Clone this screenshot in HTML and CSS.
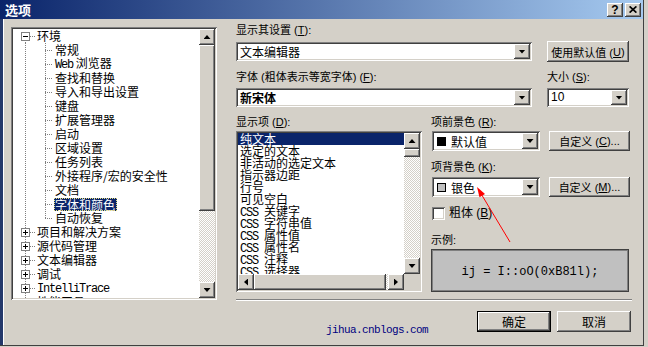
FILE: index.html
```html
<!DOCTYPE html>
<html lang="zh-CN">
<head>
<meta charset="utf-8">
<title>选项</title>
<link rel="stylesheet" href="styles.css">
</head>
<body>
<div class="window">
  <div class="titlebar">
    <span class="title">选项</span>
    <div class="tbtns">
      <span class="tbtn">?</span>
      <span class="tbtn"><svg width="8" height="7" viewBox="0 0 8 7"><path d="M0.6 0.4L7.4 6.6M7.4 0.4L0.6 6.6" stroke="#000" stroke-width="1.7"/></svg></span>
    </div>
  </div>
  <div class="client">
    <div class="tree">
      <div class="tree-items">
        <div class="row"><span class="g0 first"><i class="exp"></i></span><span class="t">环境</span></div>
        <div class="row"><span class="g1"></span><span class="t">常规</span></div>
        <div class="row"><span class="g1"></span><span class="t"><span class="asc">Web</span> 浏览器</span></div>
        <div class="row"><span class="g1"></span><span class="t">查找和替换</span></div>
        <div class="row"><span class="g1"></span><span class="t">导入和导出设置</span></div>
        <div class="row"><span class="g1"></span><span class="t">键盘</span></div>
        <div class="row"><span class="g1"></span><span class="t">扩展管理器</span></div>
        <div class="row"><span class="g1"></span><span class="t">启动</span></div>
        <div class="row"><span class="g1"></span><span class="t">区域设置</span></div>
        <div class="row"><span class="g1"></span><span class="t">任务列表</span></div>
        <div class="row"><span class="g1"></span><span class="t">外接程序/宏的安全性</span></div>
        <div class="row"><span class="g1"></span><span class="t">文档</span></div>
        <div class="row"><span class="g1"></span><span class="t sel">字体和颜色</span></div>
        <div class="row"><span class="g1 last"></span><span class="t">自动恢复</span></div>
        <div class="row"><span class="g0"><i class="exp plus"></i></span><span class="t">项目和解决方案</span></div>
        <div class="row"><span class="g0"><i class="exp plus"></i></span><span class="t">源代码管理</span></div>
        <div class="row"><span class="g0"><i class="exp plus"></i></span><span class="t">文本编辑器</span></div>
        <div class="row"><span class="g0"><i class="exp plus"></i></span><span class="t">调试</span></div>
        <div class="row"><span class="g0"><i class="exp plus"></i></span><span class="t"><span class="asc">IntelliTrace</span></span></div>
        <div class="row"><span class="g0"><i class="exp plus"></i></span><span class="t">性能工具</span></div>
      </div>
      <div class="vscroll">
        <div class="sbtn"><i class="au"></i></div>
        <div class="thumb tree-thumb"></div>
        <div class="track"></div>
        <div class="sbtn"><i class="ad"></i></div>
      </div>
    </div>

    <div class="panel">
      <span class="lbl">显示其设置 (<u>T</u>):</span>
      <div class="rowb">
        <div class="combo w-main"><span class="val">文本编辑器</span><span class="dd"><i class="ad"></i></span></div>
        <div class="btn w-side">使用默认值 (<u>U</u>)</div>
      </div>
      <div class="rowc">
        <span class="lbl w-main">字体 (粗体表示等宽字体) (<u>F</u>):</span>
        <span class="lbl">大小 (<u>S</u>):</span>
      </div>
      <div class="rowd">
        <div class="combo w-main"><span class="val bold">新宋体</span><span class="dd"><i class="ad"></i></span></div>
        <div class="combo w-side"><span class="val lat">10</span><span class="dd"><i class="ad"></i></span></div>
      </div>

      <div class="lower">
        <div class="listcol">
          <span class="lbl">显示项 (<u>D</u>):</span>
          <div class="list">
            <div class="list-main">
              <div class="list-items">
                <div class="li sel">纯文本</div>
                <div class="li">选定的文本</div>
                <div class="li">非活动的选定文本</div>
                <div class="li">指示器边距</div>
                <div class="li">行号</div>
                <div class="li">可见空白</div>
                <div class="li"><span class="asc">CSS </span>关键字</div>
                <div class="li"><span class="asc">CSS </span>字符串值</div>
                <div class="li"><span class="asc">CSS </span>属性值</div>
                <div class="li"><span class="asc">CSS </span>属性名</div>
                <div class="li"><span class="asc">CSS </span>注释</div>
                <div class="li"><span class="asc">CSS </span>选择器</div>
              </div>
              <div class="vscroll">
                <div class="sbtn"><i class="au"></i></div>
                <div class="thumb list-thumb"></div>
                <div class="track"></div>
                <div class="sbtn"><i class="ad"></i></div>
              </div>
            </div>
            <div class="hscroll">
              <div class="sbtn"><i class="al"></i></div>
              <div class="thumb h-thumb"></div>
              <div class="track"></div>
              <div class="sbtn"><i class="ar"></i></div>
              <div class="corner"></div>
            </div>
          </div>
        </div>

        <div class="props">
          <span class="lbl">项前景色 (<u>R</u>):</span>
          <div class="prow">
            <div class="combo w-color"><span class="val"><i class="sw black"></i>默认值</span><span class="dd"><i class="ad"></i></span></div>
            <div class="btn w-custom">自定义 (<u>C</u>)...</div>
          </div>
          <span class="lbl gap10">项背景色 (<u>K</u>):</span>
          <div class="prow tight">
            <div class="combo w-color"><span class="val"><i class="sw silver"></i>银色</span><span class="dd"><i class="ad"></i></span></div>
            <div class="btn w-custom">自定义 (<u>M</u>)...</div>
          </div>
          <div class="checkrow">
            <i class="cb"></i><span class="cbl">粗体 (<u>B</u>)</span>
          </div>
          <span class="lbl sample-lbl">示例:</span>
          <div class="sample">ij = I::oO(0xB81l);</div>
        </div>
      </div>

      <div class="sep"></div>
      <div class="footer">
        <span class="wm">jihua.cnblogs.com</span>
        <div class="btn def big w-ok">确定</div>
        <div class="btn big w-cancel">取消</div>
      </div>
    </div>
  </div>
  <svg class="arrow" width="644" height="346" viewBox="0 0 644 346">
    <line x1="510" y1="242" x2="481.5" y2="194.5" stroke="#ff0000" stroke-width="1"/>
    <polygon points="477,187 485,194 479.5,197.3" fill="#ff0000"/>
  </svg>
</div>
</body>
</html>
```
FILE: styles.css
```css
* { box-sizing: border-box; }

:root {
  --vd: repeating-linear-gradient(to bottom, #808080 0 1px, transparent 1px 2px);
  --hd: repeating-linear-gradient(to right, #808080 0 1px, transparent 1px 2px);
  --raised: inset -1px -1px #404040, inset 1px 1px #ffffff, inset -2px -2px #808080, inset 2px 2px #d4d0c8;
  --sunken: inset 1px 1px #808080, inset -1px -1px #ffffff, inset 2px 2px #404040, inset -2px -2px #d4d0c8;
}

body {
  margin: 0;
  background: #d4d0c8;
  font-family: "Liberation Sans", "Noto Sans CJK SC", sans-serif;
  font-size: 11px;
  color: #000;
}

u { text-decoration: underline; text-underline-offset: 1px; }
i { display: block; font-style: normal; }

.window {
  position: relative;
  width: 644px;
  height: 346px;
  background: #d4d0c8;
  border-right: 1px solid #404040;
  border-bottom: 1px solid #404040;
  overflow: hidden;
}

/* title bar */
.titlebar {
  height: 19px;
  display: flex;
  align-items: center;
  justify-content: space-between;
  padding: 0 2px 0 5px;
  background: linear-gradient(to right, #0a246a, #a6caf0);
}
.title {
  color: #fff;
  font: bold 13px "Noto Sans CJK SC", sans-serif;
  line-height: 19px;
}
.tbtns { display: flex; gap: 2px; }
.tbtn {
  width: 16px;
  height: 14px;
  display: flex;
  align-items: center;
  justify-content: center;
  background: #d4d0c8;
  box-shadow: var(--raised);
  font: bold 12px "Liberation Sans", sans-serif;
  line-height: 14px;
}

/* client */
.client {
  display: flex;
  align-items: flex-start;
  height: 327px;
  padding: 5px 0 0 8px;
  border-left: 3px solid #24386a;
  box-shadow: inset 1px 0 #ffffff;
}

/* tree */
.tree {
  flex: none;
  margin-top: 3px;
  width: 206px;
  height: 273px;
  padding: 2px;
  display: flex;
  background: #fff;
  box-shadow: var(--sunken);
}
.tree-items {
  flex: 1;
  overflow: hidden;
  font: 12px "Noto Sans CJK SC", sans-serif;
}
.row {
  display: flex;
  align-items: center;
  height: 14px;
  white-space: nowrap;
}
.t { line-height: 14px; }
.t.sel {
  margin-left: -1px;
  padding: 0 2px 0 1px;
  line-height: 13px;
  background: #0a246a;
  color: #fff;
  outline: 1px dotted #e8e080;
  outline-offset: -1px;
}
.asc {
  font-family: "Liberation Mono", monospace;
  letter-spacing: -1.2px;
}
.g0, .g1 {
  flex: none;
  height: 14px;
  background-repeat: no-repeat;
}
.g0 {
  width: 24px;
  display: flex;
  align-items: center;
  padding-left: 8px;
  background-image: var(--vd), var(--hd);
  background-size: 1px 14px, 6px 1px;
  background-position: 12px 0, 17px 7px;
}
.g0.first {
  background-size: 1px 7px, 6px 1px;
  background-position: 12px 7px, 17px 7px;
}
.g1 {
  width: 42px;
  background-image: var(--vd), var(--vd), var(--hd);
  background-size: 1px 14px, 1px 14px, 8px 1px;
  background-position: 12px 0, 32px 0, 32px 7px;
}
.g1.last {
  background-size: 1px 14px, 1px 8px, 8px 1px;
}
.exp {
  position: relative;
  width: 9px;
  height: 9px;
  border: 1px solid #808080;
  background: #fff;
}
.exp::before {
  content: "";
  position: absolute;
  left: 1px;
  top: 3px;
  width: 5px;
  height: 1px;
  background: #000;
}
.exp.plus::after {
  content: "";
  position: absolute;
  left: 3px;
  top: 1px;
  width: 1px;
  height: 5px;
  background: #000;
}

/* scrollbars */
.vscroll {
  flex: none;
  width: 16px;
  display: flex;
  flex-direction: column;
}
.hscroll {
  flex: none;
  height: 16px;
  display: flex;
}
.sbtn {
  flex: none;
  width: 16px;
  height: 16px;
  display: flex;
  align-items: center;
  justify-content: center;
  background: #d4d0c8;
  box-shadow: var(--raised);
}
.thumb {
  flex: none;
  background: #d4d0c8;
  box-shadow: var(--raised);
}
.tree-thumb { height: 166px; }
.list-thumb { height: 8px; }
.h-thumb { width: 132px; }
.track {
  flex: 1;
  background: repeating-conic-gradient(#d4d0c8 0 25%, #ffffff 0 50%) 0 0 / 2px 2px;
}
.corner { flex: none; width: 16px; background: #d4d0c8; }

.ad, .au { width: 7px; height: 4px; background: #000; }
.ad { clip-path: polygon(0 0, 100% 0, 50% 100%); }
.au { clip-path: polygon(50% 0, 100% 100%, 0 100%); }
.al, .ar { width: 4px; height: 7px; background: #000; }
.al { clip-path: polygon(100% 0, 100% 100%, 0 50%); }
.ar { clip-path: polygon(0 0, 100% 50%, 0 100%); }

/* right panel */
.panel {
  flex: none;
  margin-left: 19px;
  width: 396px;
}
.lbl {
  display: block;
  height: 12px;
  line-height: 12px;
  white-space: nowrap;
}
.w-main { width: 296px; flex: none; }
.w-side { width: 82px; flex: none; }
.rowb {
  display: flex;
  align-items: center;
  gap: 15px;
  height: 21px;
  margin-top: 5px;
}
.rowc {
  display: flex;
  gap: 15px;
  margin-top: 9px;
}
.rowd {
  display: flex;
  gap: 15px;
  margin-top: 5px;
}

.combo {
  height: 19px;
  padding: 2px;
  display: flex;
  background: #fff;
  box-shadow: var(--sunken);
}
.combo .val {
  flex: 1;
  display: flex;
  align-items: center;
  gap: 5px;
  padding-left: 2px;
  font: 12px "Noto Sans CJK SC", sans-serif;
  line-height: 15px;
  white-space: nowrap;
}
.combo .val.bold { font-weight: bold; }
.combo .val.lat { font-family: "Liberation Sans", sans-serif; }
.combo .dd {
  flex: none;
  width: 16px;
  display: flex;
  align-items: center;
  justify-content: center;
  background: #d4d0c8;
  box-shadow: var(--raised);
}

.btn {
  height: 21px;
  display: flex;
  align-items: center;
  justify-content: center;
  background: #d4d0c8;
  box-shadow: var(--raised);
  white-space: nowrap;
}
.btn.big { font-size: 12px; }
.btn.def {
  border: 1px solid #000;
}

.lower {
  display: flex;
  margin-top: 9px;
}
.listcol { width: 186px; flex: none; }
.list {
  margin-top: 3px;
  width: 186px;
  height: 161px;
  padding: 2px;
  display: flex;
  flex-direction: column;
  background: #fff;
  box-shadow: var(--sunken);
}
.list-main {
  display: flex;
  height: 141px;
}
.list-items {
  flex: 1;
  overflow: hidden;
  font: 12px "Noto Sans CJK SC", sans-serif;
  line-height: 12px;
}
.li {
  height: 12px;
  padding-left: 2px;
  white-space: nowrap;
}
.li.sel { background: #0a246a; color: #fff; }

.props {
  flex: none;
  width: 200px;
  margin-left: 9px;
}
.prow {
  display: flex;
  align-items: center;
  gap: 9px;
  height: 20px;
  margin-top: 3px;
}
.prow.tight { margin-top: 4px; }
.prow .combo { height: 20px; margin-left: 1px; }
.prow .btn { height: 20px; }
.w-color { width: 108px; flex: none; }
.w-custom { width: 81px; flex: none; }
.gap10 { margin-top: 10px; }
.sw {
  flex: none;
  width: 9px;
  height: 9px;
  margin-left: 1px;
  border: 1px solid #000;
}
.sw.black { background: #000; }
.sw.silver { background: #c0c0c0; }

.checkrow {
  display: flex;
  align-items: center;
  gap: 4px;
  margin-top: 10px;
  height: 13px;
  padding-left: 1px;
}
.cb {
  flex: none;
  width: 13px;
  height: 13px;
  background: #fff;
  box-shadow: var(--sunken);
}
.cbl {
  font-size: 12px;
  line-height: 13px;
}
.sample-lbl { margin-top: 14px; }
.sample {
  margin-top: 3px;
  width: 198px;
  height: 43px;
  display: flex;
  align-items: center;
  justify-content: center;
  background: #c0c0c0;
  border: 1px solid #404040;
  box-shadow: inset 1px 1px #808080, inset -1px -1px #808080;
  font: 12px "Liberation Mono", monospace;
  padding-top: 3px;
}

.sep {
  margin-top: 7px;
  height: 2px;
  border-top: 1px solid #808080;
  border-bottom: 1px solid #fff;
}
.footer {
  display: flex;
  height: 21px;
  margin-top: 10px;
  padding-right: 1px;
}
.wm {
  align-self: flex-end;
  margin-left: 90px;
  margin-bottom: -4px;
  color: #000080;
  font: 11px "Liberation Mono", monospace;
  letter-spacing: -0.6px;
  line-height: 11px;
}
.w-ok { width: 74px; margin-left: auto; }
.w-cancel { width: 74px; margin-left: 6px; }

.arrow {
  position: absolute;
  left: 0;
  top: 0;
  pointer-events: none;
}
```
